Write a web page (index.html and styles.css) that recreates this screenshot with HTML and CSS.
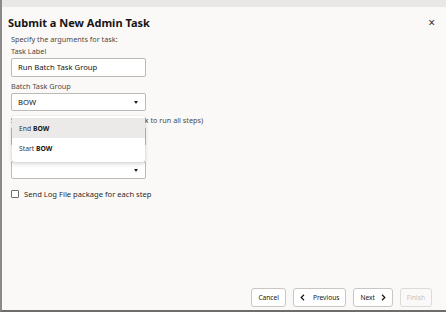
FILE: index.html
```html
<!DOCTYPE html>
<html>
<head>
<meta charset="utf-8">
<link rel="stylesheet" href="styles.css">
</head>
<body>
<div class="frame">
  <div class="topbar"></div>
  <div class="dialog">
    <div class="header">
      <h1 class="title">Submit a New Admin Task</h1>
      <span class="close">×</span>
    </div>
    <div class="body">
      <div class="intro">Specify the arguments for task:</div>
      <div class="field">
        <div class="label">Task Label</div>
        <div class="input">Run Batch Task Group</div>
      </div>
      <div class="field group-field">
        <div class="label">Batch Task Group</div>
        <div class="input select">BOW<span class="caret"></span></div>
        <div class="menu">
          <div class="option active">End <b>BOW</b></div>
          <div class="option">Start <b>BOW</b></div>
        </div>
      </div>
      <div class="field step-field">
        <div class="label step-label">Starting step number to run (leave blank to run all steps)</div>
        <div class="input"></div>
      </div>
      <div class="field">
        <div class="input select"><span class="caret"></span></div>
      </div>
      <label class="check"><span class="box"></span>Send Log File package for each step</label>
    </div>
    <div class="footer">
      <button class="btn">Cancel</button>
      <button class="btn"><svg class="chev" width="5" height="7" viewBox="0 0 5 7"><path d="M4 0.8 L1.2 3.5 L4 6.2" fill="none" stroke="#161513" stroke-width="1.2"/></svg>Previous</button>
      <button class="btn">Next<svg class="chev right" width="5" height="7" viewBox="0 0 5 7"><path d="M1 0.8 L3.8 3.5 L1 6.2" fill="none" stroke="#161513" stroke-width="1.2"/></svg></button>
      <button class="btn disabled">Finish</button>
    </div>
  </div>
</div>
</body>
</html>
```
FILE: styles.css
```css
html, body {
  margin: 0;
  padding: 0;
  width: 446px;
  height: 312px;
  overflow: hidden;
  background: #ffffff;
  font-family: "Noto Sans", "Open Sans", sans-serif;
  color: #161513;
}
.frame {
  height: 312px;
  box-sizing: border-box;
  border-left: 2px solid #8c8a87;
  border-bottom: 2px solid #6f6d6a;
  display: flex;
  flex-direction: column;
  background: #fbf9f8;
}
.topbar {
  height: 7px;
  background: #e9e8e6;
  flex: none;
}
.dialog {
  flex: 1;
  display: flex;
  flex-direction: column;
  min-height: 0;
}
.header {
  display: flex;
  align-items: center;
  justify-content: space-between;
  padding: 9px 11px 0 6px;
}
.title {
  margin: 0;
  font-size: 11px;
  font-weight: 700;
  line-height: 14px;
}
.close {
  font-size: 12px;
  line-height: 14px;
  color: #333;
}
.body {
  flex: 1;
  padding: 4px 0 0 9px;
  display: flex;
  flex-direction: column;
}
.intro {
  font-size: 7.3px;
  line-height: 10px;
  color: #4a4845;
  margin-bottom: 2px;
}
.field {
  display: flex;
  flex-direction: column;
  width: 135px;
  margin-bottom: 4px;
}
.label {
  font-size: 7.3px;
  line-height: 10px;
  color: #4a4845;
  margin-bottom: 2px;
  white-space: nowrap;
}
.step-label {
  line-height: 8px;
  margin-top: 1px;
  margin-bottom: 3px;
  font-size: 7.2px;
  letter-spacing: 0.02px;
}
.input {
  box-sizing: border-box;
  height: 19px;
  border: 1px solid #bcbab6;
  border-radius: 2px;
  background: #fff;
  font-size: 7.7px;
  line-height: 17px;
  padding-left: 6px;
  position: relative;
  color: #161513;
}
.input.select {
  height: 18px;
  line-height: 16px;
}
.caret {
  position: absolute;
  right: 7px;
  top: 7px;
  width: 0;
  height: 0;
  border-left: 2.5px solid transparent;
  border-right: 2.5px solid transparent;
  border-top: 3px solid #222;
}
.group-field {
  position: relative;
}
.step-field {
  margin-bottom: 15px;
}
.menu {
  position: absolute;
  left: 1px;
  top: 35px;
  width: 133px;
  background: #fff;
  box-shadow: 0 2px 4px rgba(0,0,0,0.16), 0 0 1px rgba(0,0,0,0.2);
  border-radius: 2px;
  padding: 2px 0 4px;
  z-index: 5;
}
.option {
  height: 20px;
  box-sizing: border-box;
  padding: 6px 0 0 7px;
  line-height: 9px;
  font-size: 6.8px;
  color: #3a3835;
}
.option b {
  color: #161513;
}
.option.active {
  background: #ebeae8;
}
.check {
  display: flex;
  align-items: center;
  font-size: 7.6px;
  line-height: 10px;
  color: #2c2a27;
  margin-top: 6px;
}
.box {
  width: 6px;
  height: 6px;
  border: 1px solid #6f6d6a;
  border-radius: 1px;
  background: #fff;
  margin-right: 5px;
}
.footer {
  display: flex;
  justify-content: flex-end;
  gap: 7px;
  padding: 0 14px 3px 0;
}
.btn {
  height: 19px;
  box-sizing: border-box;
  border: 1px solid #c9c7c3;
  border-radius: 3px;
  background: #fff;
  font-family: "Noto Sans", "Open Sans", sans-serif;
  font-size: 6.6px;
  color: #161513;
  padding: 0 6px;
  display: flex;
  align-items: center;
}
.chev {
  margin-right: 8px;
  flex: none;
}
.chev.right {
  margin-right: 0;
  margin-left: 6px;
}
.btn.disabled {
  color: #c4c2be;
  border-color: #dddbd8;
  background: #fbf9f8;
}
```
